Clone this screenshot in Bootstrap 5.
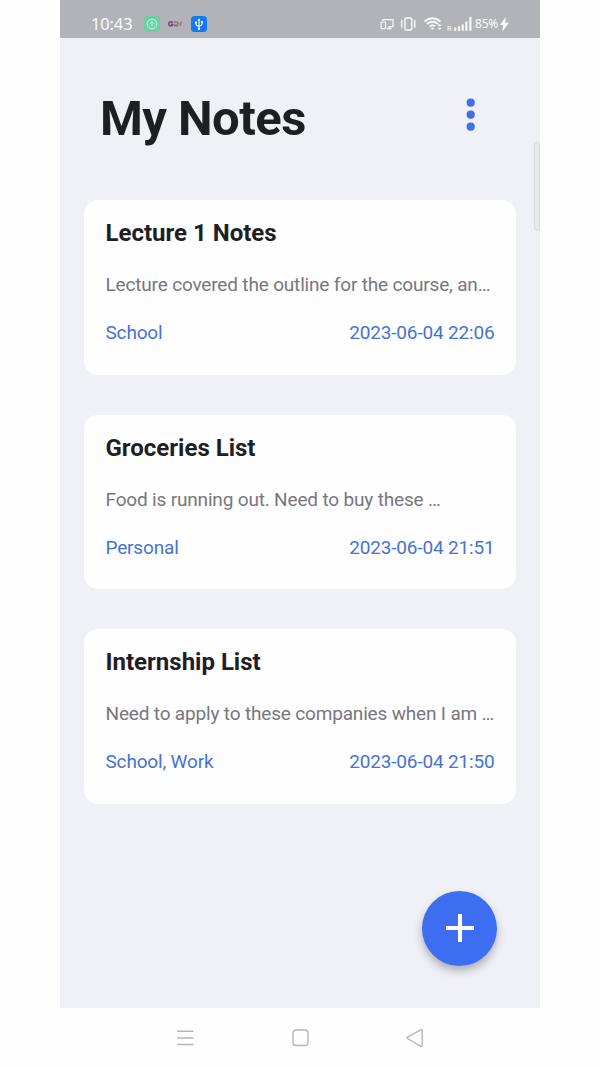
<!DOCTYPE html>
<html lang="en">
<head>
<meta charset="utf-8">
<meta name="viewport" content="width=device-width, initial-scale=1">
<title>My Notes</title>
<link href="https://cdn.jsdelivr.net/npm/bootstrap@5.3.0/dist/css/bootstrap.min.css" rel="stylesheet">
<style>
body{font-family:Roboto,sans-serif;background:#fefdff;height:1067px;overflow:hidden}
.phone{width:480px;height:1067px}
.status-bar{height:38px;background:#b2b3b8;color:#fafafc;padding:10px 30px 0 31px}
.clock{font-family:"Noto Sans",sans-serif;font-size:16.5px;line-height:28px;width:53px;white-space:nowrap;letter-spacing:-.15px}
.battery{font-family:"Noto Sans",sans-serif;font-size:12px;line-height:28px;width:24px;margin-left:3px;white-space:nowrap;letter-spacing:-.2px}
.screen{height:970px;background:#eff1f7}
.top-row{padding:52px 64px 0 40px;height:162px}
.page-title{font-size:49px;line-height:57px;font-weight:700;color:#1e1f22;letter-spacing:-.55px}
.note-list{gap:40px;padding:0 24px}
.note-card{height:174.7px;border:0;border-radius:14px;background:#fefdff;padding:17px 21.5px 0}
.note-title{font-size:24px;line-height:32px;font-weight:700;color:#1e1f22;margin-bottom:24px}
.note-text,.note-meta{font-size:19px;line-height:24px;white-space:nowrap;letter-spacing:-.17px}
.note-text{color:#77787b;margin-bottom:24px}
.note-meta{color:#4673d3}
.fab{right:42.7px;bottom:42.3px;width:75px;height:75px;background:#3d6df0;box-shadow:0 5px 9px rgba(60,60,70,.36)}
.scroll-thumb{right:0;top:104px;width:6px;height:89px;border:1px solid #dcdde1;border-radius:3px;background:#e8e9ed}
.nav-keys{height:59px;padding:0 115px 0 116px}
</style>
</head>
<body>
<div class="phone mx-auto">
  <header class="status-bar d-flex align-items-start">
    <span class="clock">10:43</span>
    <svg width="64" height="28" viewBox="0 0 64 28" fill="none">
      <rect y="6" width="16" height="16" rx="3" fill="#70cda4"/>
      <circle cx="8" cy="14" r="4.8" stroke="#c8f4df"/>
      <path d="M8 11.5v5M5.8 13.7 8 11.5l2.2 2.2" stroke="#c8f4df"/>
      <g stroke-width="1.7"><path d="M29 12.6c-2.5-1.6-4.5-.4-4.3 1.6.2 2.1 3 2.3 4.2.4h-2" stroke="#754b83"/><path d="M30 12h3" stroke="#d65b70"/><path d="M30 15.5h3" stroke="#4873aa"/><path d="M34 11.8l-.8 4.5" stroke="#47a46e"/><path d="m38 11.7-2 2.2 1 2" stroke="#dc6359"/></g>
      <rect x="47" y="6" width="16" height="16" rx="3.5" fill="#1678ef"/>
      <path d="M55 9v10M52 12.5v1.7q0 1.3 3 2.2M58 12v2q0 1.3-3 2.4" stroke="#fff" stroke-width="1.1"/>
      <path d="m53.5 10.5 1.5-2 1.5 2zM51 11.5h2v2h-2zM57 11h2v2h-2z" fill="#fff"/><circle cx="55" cy="19" r="1.1" fill="#fff"/>
    </svg>
    <svg class="ms-auto flex-shrink-0" width="92" height="28" viewBox="0 0 92 28" fill="none" stroke="#fafafc" stroke-width="1.2">
      <path d="M3 11V9.6h10v7H8M9.5 16.6v1.9M7 18.7h4.5"/><rect x="1.1" y="12" width="4.4" height="6.6" rx=".6"/>
      <rect x="25" y="8" width="6.8" height="12" rx="1.3" stroke-width="1.4"/>
      <path d="m21.4 10 .8 1.3-.8 1.3.8 1.3-.8 1.3.8 1.3-.8 1.4M35.2 10l-.8 1.3.8 1.3-.8 1.3.8 1.3-.8 1.3.8 1.4"/>
      <path d="M44.5 11.4q8-6.2 16 0M47 14q5.5-4.3 11 0M49.6 16.6q3-2.3 5.4-.3" stroke-width="1.9"/>
      <path d="m50.8 18.2 1.7 1.9 1.7-1.9q-1.7-1.4-3.4 0ZM57.5 16l2-2.3 2 2.3ZM57.5 17.8l2 2.3 2-2.3Z" fill="#fafafc" stroke="none"/>
      <text x="67" y="21" font-family="Roboto, sans-serif" font-size="7.5" fill="#fafafc" stroke="none">R</text>
      <path d="M75.3 20.7v-3.2M79 20.7v-4.5M82.7 20.7v-6.2M86.4 20.7v-9.2M90.4 20.7V7" stroke-width="2.1"/>
    </svg>
    <span class="battery flex-shrink-0">85%</span>
    <svg class="flex-shrink-0" width="11" height="28" viewBox="0 0 11 28"><path d="M6.6 7 1 15h3.3L3.3 21.8 10 12.7H6.3z" fill="#fafafc"/></svg>
  </header>
  <main class="screen position-relative">
    <div class="top-row d-flex justify-content-between">
      <h1 class="page-title m-0">My Notes</h1>
      <svg width="10" height="50" viewBox="0 0 10 50" fill="#426fe9"><circle cx="4.7" cy="12.7" r="4.1"/><circle cx="4.7" cy="24.7" r="4.1"/><circle cx="4.7" cy="36.7" r="4.1"/></svg>
    </div>
    <div class="note-list d-flex flex-column">
      <article class="card note-card">
        <h2 class="note-title">Lecture 1 Notes</h2>
        <p class="note-text">Lecture covered the outline for the course, an…</p>
        <div class="note-meta d-flex justify-content-between"><span>School</span><time>2023-06-04 22:06</time></div>
      </article>
      <article class="card note-card">
        <h2 class="note-title">Groceries List</h2>
        <p class="note-text">Food is running out. Need to buy these …</p>
        <div class="note-meta d-flex justify-content-between"><span>Personal</span><time>2023-06-04 21:51</time></div>
      </article>
      <article class="card note-card">
        <h2 class="note-title">Internship List</h2>
        <p class="note-text">Need to apply to these companies when I am …</p>
        <div class="note-meta d-flex justify-content-between"><span>School, Work</span><time>2023-06-04 21:50</time></div>
      </article>
    </div>
    <div class="scroll-thumb position-absolute"></div>
    <button class="fab btn rounded-circle border-0 p-0 position-absolute d-flex align-items-center justify-content-center" aria-label="Add note">
      <svg width="28" height="28" viewBox="0 0 28 28"><path d="M14 0v28M0 14h28" stroke="#fff" stroke-width="4"/></svg>
    </button>
  </main>
  <nav class="nav-keys d-flex justify-content-between align-items-center">
    <svg width="18" height="20" viewBox="0 0 18 20" stroke="#b6b5b9" stroke-width="1.5"><path d="M1 3.2h16.5M1 10h16.5M1 16.4h16.5"/></svg>
    <svg width="18" height="20" viewBox="0 0 18 20" fill="none" stroke="#b6b5b9" stroke-width="1.4"><rect x="2" y="2" width="15" height="15.5" rx="3.2"/></svg>
    <svg width="20" height="20" viewBox="0 0 20 20" fill="none" stroke="#b6b5b9" stroke-width="1.4"><path d="M15.6 1.8 2.5 9.1q-1.2.7 0 1.4L15.6 18q1.6.7 1.6-.9V2.7q0-1.7-1.6-.9Z"/></svg>
  </nav>
</div>
<script src="https://cdn.jsdelivr.net/npm/bootstrap@5.3.0/dist/js/bootstrap.bundle.min.js"></script>
</body>
</html>
